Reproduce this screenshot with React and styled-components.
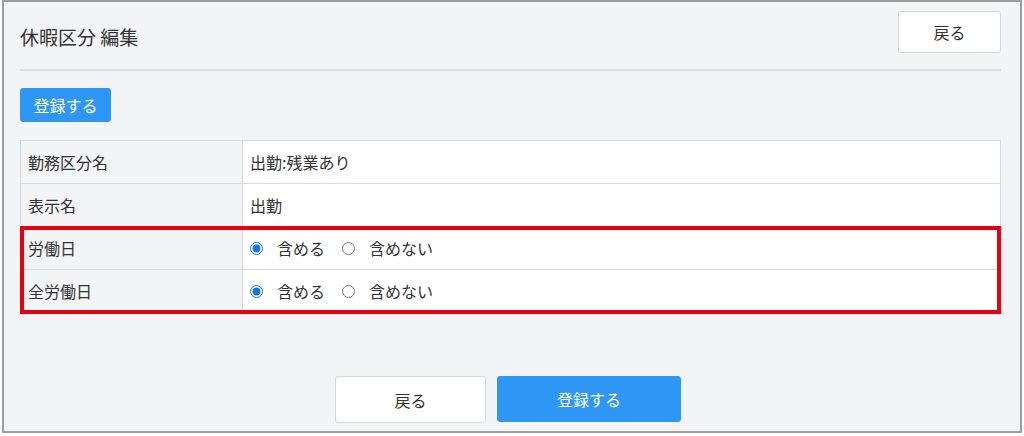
import React from "react";
import styled, { createGlobalStyle } from "styled-components";

const Global = createGlobalStyle`
  html, body { margin: 0; padding: 0; background: #ffffff; }
  body { font-family: "Noto Sans CJK JP", "Noto Sans", sans-serif; color: #333333; }
  * { box-sizing: border-box; }
`;

const Frame = styled.div`
  width: 1020px;
  height: 433px;
  margin-left: 2px;
  border: 2px solid #9d9d9d;
  background: #f3f4f6;
  padding: 9px 19px 0 16px;
  display: flex;
  flex-direction: column;
`;

const Header = styled.div`
  display: flex;
  justify-content: space-between;
  align-items: flex-start;
`;

const Title = styled.h1`
  margin: 13px 0 0 0;
  font-size: 19px;
  line-height: 26px;
  font-weight: 400;
  color: #333;
`;

const Button = styled.button`
  font-family: inherit;
  font-size: 16px;
  line-height: 22px;
  border-radius: 3px;
  cursor: pointer;
  padding: 0;
  width: ${(p) => p.$w}px;
  height: ${(p) => p.$h}px;
  border: 1px solid ${(p) => (p.$primary ? "#2e96f5" : "#d4d7db")};
  background: ${(p) => (p.$primary ? "#2e96f5" : "#ffffff")};
  color: ${(p) => (p.$primary ? "#ffffff" : "#333333")};
`;

const Divider = styled.hr`
  margin: 16px 0 0 0;
  border: 0;
  border-top: 2px solid #dcdfe2;
`;

const Toolbar = styled.div`
  margin-top: 17px;
  display: flex;
`;

const Table = styled.div`
  margin-top: 18px;
  border: 1px solid #d6d9dd;
  border-bottom: 0;
  display: flex;
  flex-direction: column;
`;

const Highlight = styled.div`
  display: flex;
  flex-direction: column;
  outline: 4px solid #e8000f;
  outline-offset: -3px;
`;

const Row = styled.div`
  display: grid;
  grid-template-columns: 222px 1fr;
  height: 43px;
  border-bottom: 1px solid #d6d9dd;
`;

const LabelCell = styled.div`
  background: #f3f4f6;
  border-right: 1px solid #d6d9dd;
  display: flex;
  align-items: center;
  padding-left: 7px;
  font-size: 16px;
`;

const ValueCell = styled.div`
  background: #ffffff;
  display: flex;
  align-items: center;
  padding-left: 7px;
  font-size: 16px;
`;

const RadioGroup = styled.div`
  display: flex;
  align-items: center;
  gap: 17px;
`;

const RadioLabel = styled.label`
  display: inline-flex;
  align-items: center;
  gap: 14px;
  font-size: 16px;
`;

const Radio = styled.input`
  margin: 0;
  width: 13px;
  height: 13px;
  accent-color: #1a73e8;
`;

const Footer = styled.div`
  margin-top: 63px;
  display: flex;
  justify-content: center;
  gap: 11px;
  padding-right: 5px;
`;

const rows = [
  { label: "勤務区分名", value: "出勤:残業あり" },
  { label: "表示名", value: "出勤" },
];

const radioRows = [
  { label: "労働日", name: "work" },
  { label: "全労働日", name: "allwork" },
];

function RadioRow({ label, name }) {
  return (
    <Row>
      <LabelCell>{label}</LabelCell>
      <ValueCell>
        <RadioGroup>
          <RadioLabel>
            <Radio type="radio" name={name} defaultChecked />
            含める
          </RadioLabel>
          <RadioLabel>
            <Radio type="radio" name={name} />
            含めない
          </RadioLabel>
        </RadioGroup>
      </ValueCell>
    </Row>
  );
}

export default function App() {
  return (
    <>
      <Global />
      <Frame>
        <Header>
          <Title>休暇区分 編集</Title>
          <Button $w={103} $h={42}>戻る</Button>
        </Header>
        <Divider />
        <Toolbar>
          <Button $primary $w={91} $h={34}>登録する</Button>
        </Toolbar>
        <Table>
          {rows.map((r) => (
            <Row key={r.label}>
              <LabelCell>{r.label}</LabelCell>
              <ValueCell>{r.value}</ValueCell>
            </Row>
          ))}
          <Highlight>
            {radioRows.map((r) => (
              <RadioRow key={r.name} {...r} />
            ))}
          </Highlight>
        </Table>
        <Footer>
          <Button $w={151} $h={47}>戻る</Button>
          <Button $primary $w={184} $h={46}>登録する</Button>
        </Footer>
      </Frame>
    </>
  );
}
